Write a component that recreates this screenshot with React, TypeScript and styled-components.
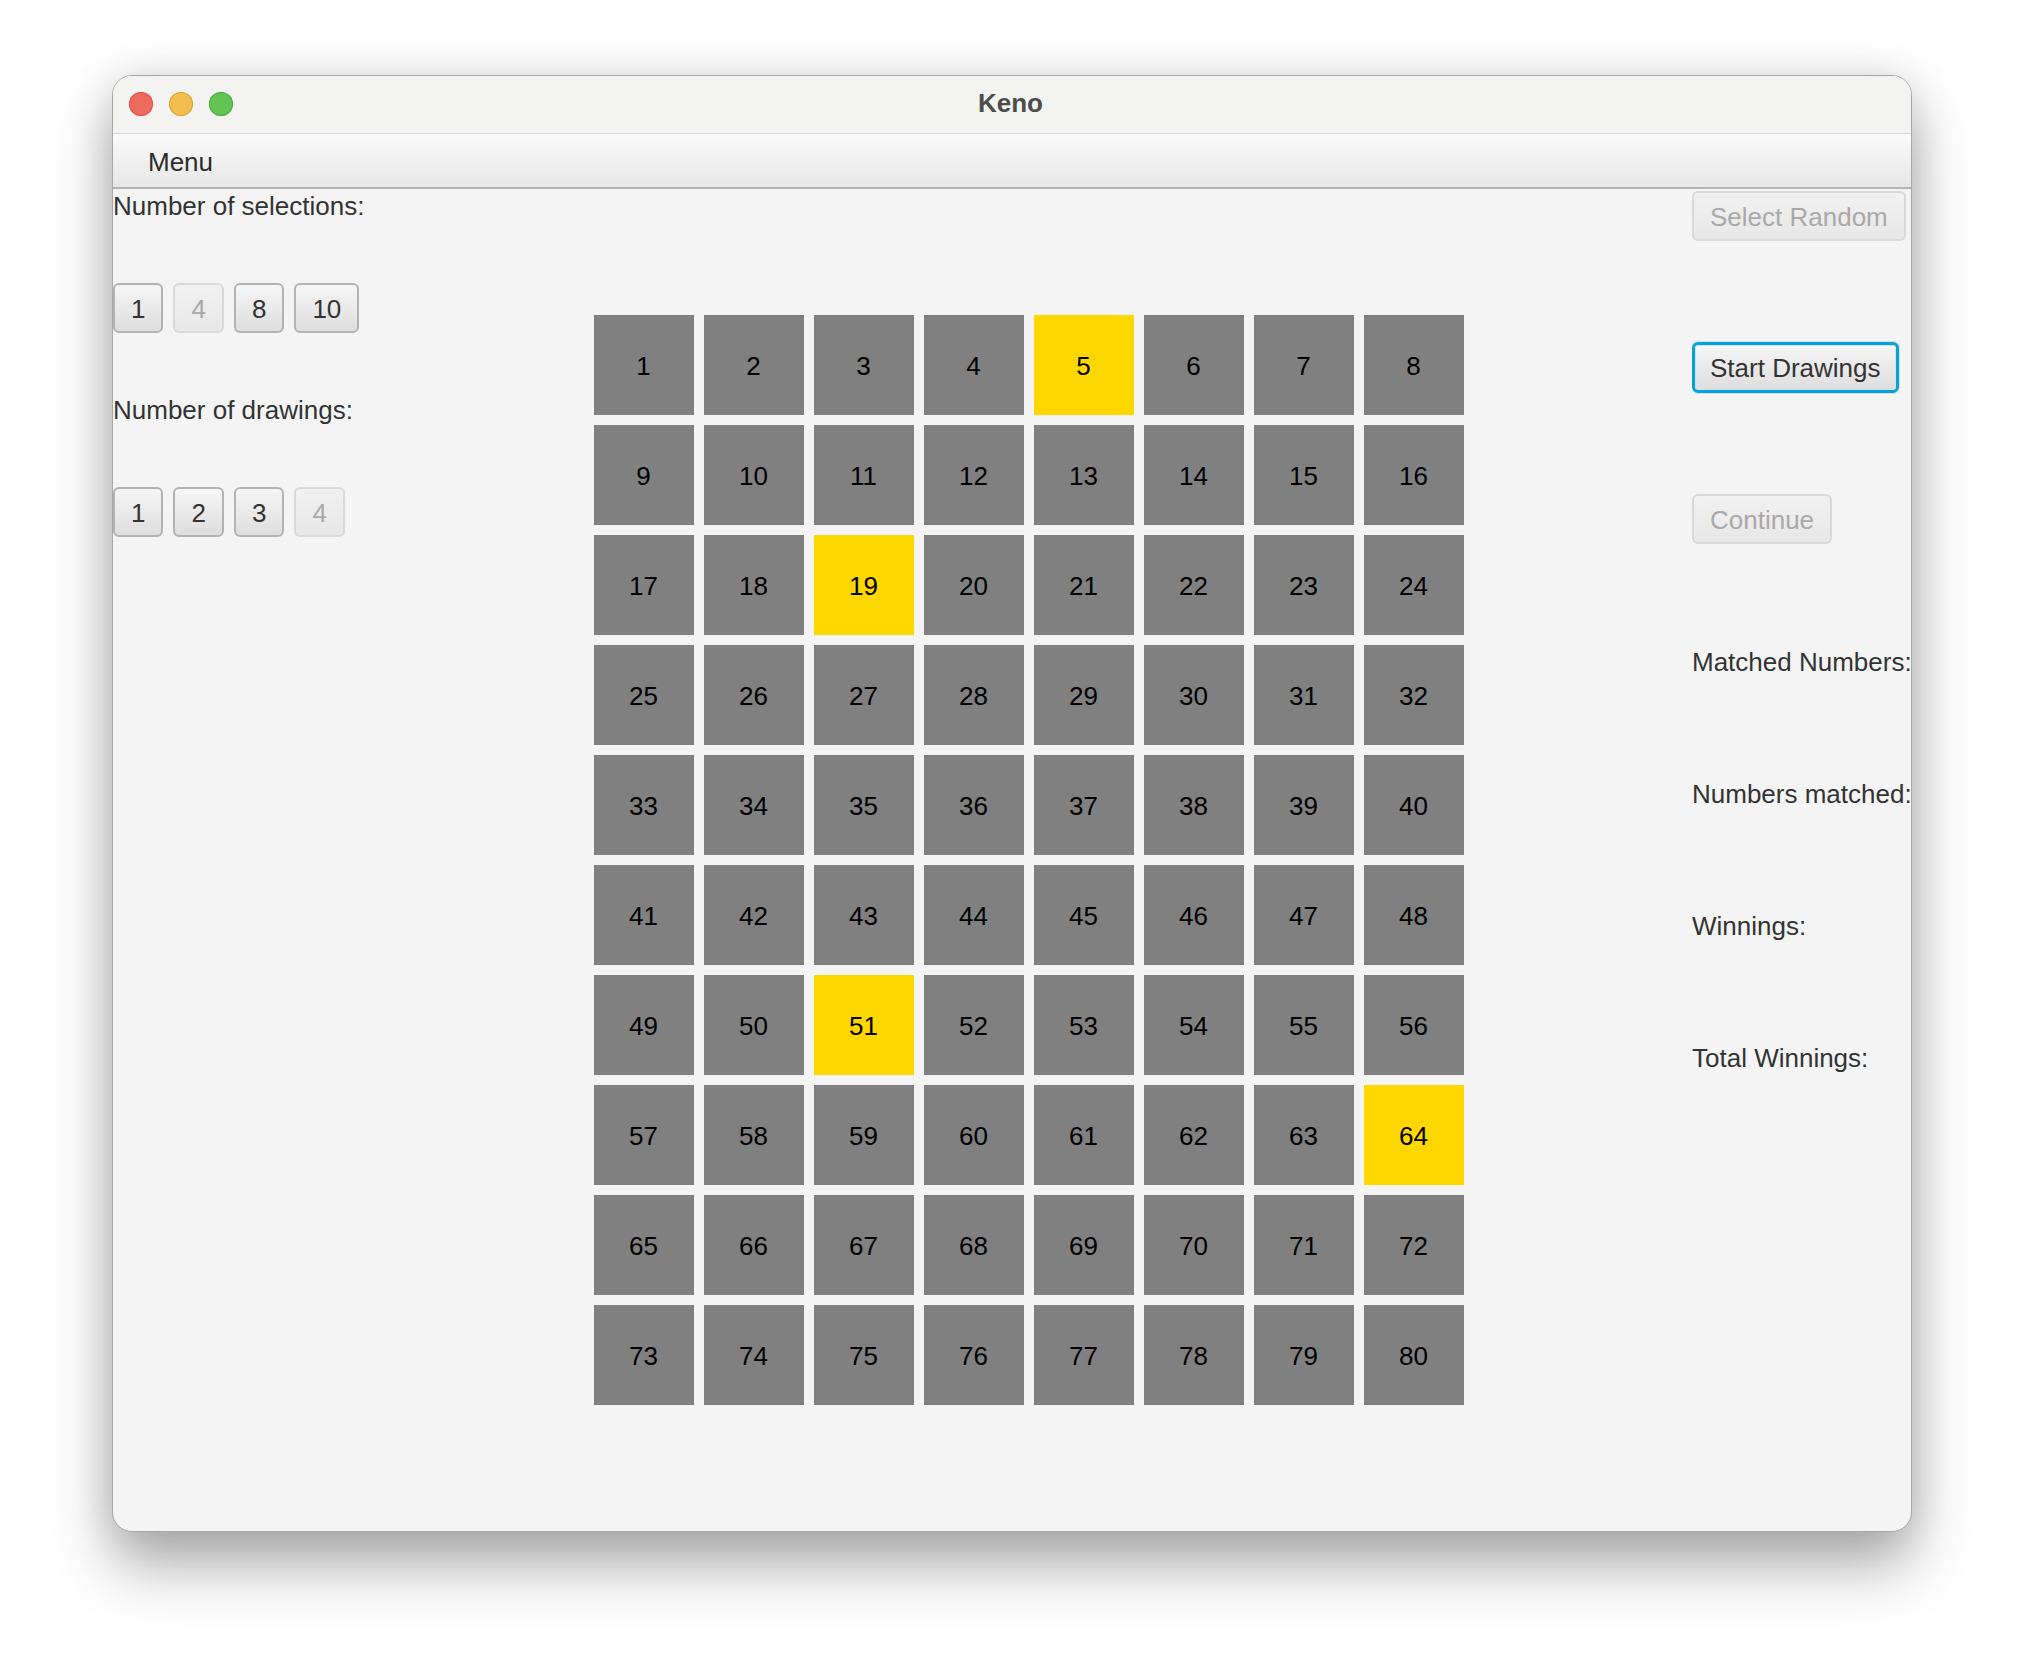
import React from 'react';
import styled, { createGlobalStyle, css } from 'styled-components';

const GlobalStyle = createGlobalStyle`
  html, body {
    margin: 0;
    padding: 0;
    background: #ffffff;
    font-family: "Liberation Sans", Arial, sans-serif;
  }
`;

const highlighted = [5, 19, 51, 64];

const selectionOptions = [
  { label: '1', disabled: false },
  { label: '4', disabled: true },
  { label: '8', disabled: false },
  { label: '10', disabled: false },
];

const drawingOptions = [
  { label: '1', disabled: false },
  { label: '2', disabled: false },
  { label: '3', disabled: false },
  { label: '4', disabled: true },
];

const App: React.FC = () => {
  const numbers = Array.from({ length: 80 }, (_, i) => i + 1);

  return (
    <>
      <GlobalStyle />
      <Page>
        <Window>
          <TitleBar>
            <Lights>
              <Light color="#ee6a5f" edge="#d5564b" />
              <Light color="#f5bd4f" edge="#d9a23a" />
              <Light color="#61c454" edge="#4ea940" />
            </Lights>
            <Title>Keno</Title>
          </TitleBar>
          <MenuBar>
            <MenuItem>Menu</MenuItem>
          </MenuBar>
          <Content>
            <LeftColumn>
              <Label>Number of selections:</Label>
              <ButtonRow>
                {selectionOptions.map((o) => (
                  <FxButton key={o.label} disabled={o.disabled}>
                    {o.label}
                  </FxButton>
                ))}
              </ButtonRow>
              <Label>Number of drawings:</Label>
              <ButtonRow>
                {drawingOptions.map((o) => (
                  <FxButton key={o.label} disabled={o.disabled}>
                    {o.label}
                  </FxButton>
                ))}
              </ButtonRow>
            </LeftColumn>

            <Center>
              <Board>
                {numbers.map((n) => (
                  <Tile key={n} picked={highlighted.includes(n)}>
                    {n}
                  </Tile>
                ))}
              </Board>
            </Center>

            <RightColumn>
              <FxButton disabled>Select Random</FxButton>
              <FxButton focused>Start Drawings</FxButton>
              <FxButton disabled>Continue</FxButton>
              <Stats>
                <Label>Matched Numbers:</Label>
                <Label>Numbers matched:</Label>
                <Label>Winnings:</Label>
                <Label>Total Winnings:</Label>
              </Stats>
            </RightColumn>
          </Content>
        </Window>
      </Page>
    </>
  );
};

export default App;

const Page = styled.div`
  width: 2024px;
  height: 1680px;
  padding: 75px 0 0 112px;
  box-sizing: border-box;
`;

const Window = styled.div`
  width: 1800px;
  height: 1457px;
  border-radius: 20px;
  overflow: hidden;
  background: #f4f4f4;
  border: 1px solid #a8a8a8;
  box-sizing: border-box;
  box-shadow: 0 34px 60px rgba(0, 0, 0, 0.32), 0 0 40px rgba(0, 0, 0, 0.12);
  display: flex;
  flex-direction: column;
`;

const TitleBar = styled.div`
  height: 57px;
  flex-shrink: 0;
  background: #f3f3f2;
  border-bottom: 1px solid #d8d8d8;
  display: flex;
  align-items: center;
  justify-content: center;
  position: relative;
`;

const Lights = styled.div`
  position: absolute;
  left: 16px;
  top: 16px;
  display: flex;
  gap: 16px;
`;

const Light = styled.span<{ color: string; edge: string }>`
  width: 24px;
  height: 24px;
  border-radius: 50%;
  background: ${(p) => p.color};
  box-shadow: inset 0 0 0 1px ${(p) => p.edge};
`;

const Title = styled.div`
  font-size: 26px;
  font-weight: bold;
  color: #4c4c4c;
  margin-left: -3px;
  margin-top: -2px;
`;

const MenuBar = styled.div`
  height: 53px;
  flex-shrink: 0;
  background: linear-gradient(#fafafa, #e7e7e7);
  border-bottom: 2px solid #b4b4b4;
  display: flex;
  align-items: center;
  padding-left: 35px;
`;

const MenuItem = styled.div`
  font-size: 26px;
  color: #2b2b2b;
  padding-top: 4px;
`;

const Content = styled.div`
  flex: 1;
  display: flex;
  min-height: 0;
`;

const LeftColumn = styled.div`
  width: 252px;
  flex-shrink: 0;
  display: flex;
  flex-direction: column;
  align-items: flex-start;
  gap: 62px;
  padding-top: 2px;
`;

const Label = styled.div`
  font-size: 26px;
  line-height: 30px;
  color: #333333;
  white-space: nowrap;
`;

const ButtonRow = styled.div`
  display: flex;
  gap: 10px;
`;

const FxButton = styled.button<{ focused?: boolean }>`
  height: 50px;
  padding: 2px 16px 0;
  box-sizing: border-box;
  font-family: "Liberation Sans", Arial, sans-serif;
  font-size: 26px;
  color: #333333;
  background: linear-gradient(#f6f6f6, #dedede);
  border: 2px solid #b3b3b3;
  border-radius: 6px;
  white-space: nowrap;
  flex-shrink: 0;

  &:disabled {
    color: #a9a9a9;
    background: linear-gradient(#f1f1f1, #e8e8e8);
    border-color: #d9d9d9;
  }

  ${(p) =>
    p.focused &&
    css`
      height: 51px;
      padding: 2px 15px 0;
      border: 3px solid #0aa1d6;
      box-shadow: inset 0 0 0 1px #cde7f1, 0 0 0 1px rgba(10, 161, 214, 0.18);
    `}
`;

const Center = styled.div`
  flex: 1;
  display: flex;
  align-items: center;
  justify-content: center;
`;

const Board = styled.div`
  display: grid;
  grid-template-columns: repeat(8, 100px);
  grid-auto-rows: 100px;
  gap: 10px;
`;

const Tile = styled.div<{ picked: boolean }>`
  background: ${(p) => (p.picked ? '#ffd700' : '#808080')};
  display: flex;
  align-items: center;
  justify-content: center;
  padding-top: 3px;
  box-sizing: border-box;
  font-size: 26px;
  color: #000000;
`;

const RightColumn = styled.div`
  width: 219px;
  flex-shrink: 0;
  display: flex;
  flex-direction: column;
  align-items: flex-start;
  gap: 101px;
  padding-top: 2px;
  overflow: hidden;
`;

const Stats = styled.div`
  display: flex;
  flex-direction: column;
  gap: 102px;
  margin-top: 2px;
`;
